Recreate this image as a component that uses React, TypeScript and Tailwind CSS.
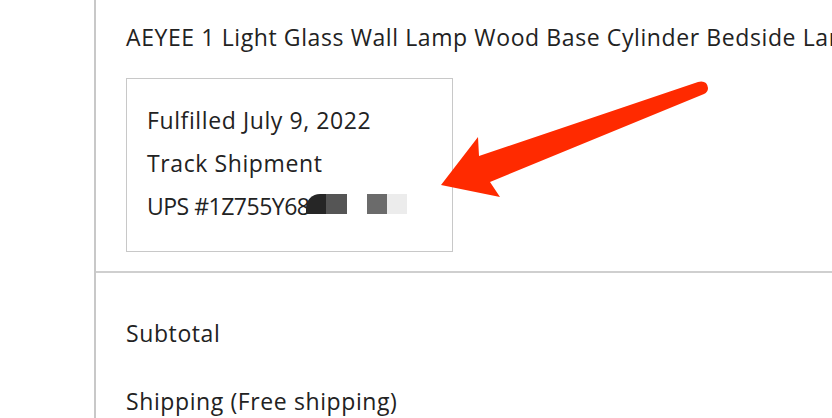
import React from "react";

export default function App() {
  return (
    <div className="relative w-[832px] h-[418px] overflow-hidden bg-white flex text-[#222222] tracking-[0.6px]" style={{ fontFamily: '"Open Sans", "Noto Sans", sans-serif' }}>
      <div className="w-[94px] shrink-0" />
      <div className="flex-1 border-l-2 border-[#c8c8c8] flex flex-col">
        <div className="pl-[30px] pt-[22px] pb-[19px] border-b-2 border-[#cfcfcf]">
          <div className="text-[23px] leading-[30px] whitespace-nowrap">AEYEE 1 Light Glass Wall Lamp Wood Base Cylinder Bedside Lamp</div>
          <div className="mt-[26px] w-[327px] border border-[#c8c8c8] pl-[20px] pt-[20px] pb-[23px] text-[23px] leading-[43px]">
            <div>Fulfilled July 9, 2022</div>
            <div>Track Shipment</div>
            <div className="flex items-center">
              <span className="tracking-[-0.5px]">UPS #1Z755Y68</span>
              <span className="flex h-[20px] -ml-[3px] -translate-y-[3px]">
                <span className="w-[20px] h-[20px] bg-[#262626] rounded-tl-[14px]" />
                <span className="w-[21px] h-[20px] bg-[#555555]" />
                <span className="w-[20px] h-[20px] bg-white" />
                <span className="w-[20px] h-[20px] bg-[#6b6b6b]" />
                <span className="w-[20px] h-[20px] bg-[#ececec]" />
              </span>
            </div>
          </div>
        </div>
        <div className="pl-[30px] pt-[26px] text-[23px] leading-[68px]">
          <div>Subtotal</div>
          <div>Shipping (Free shipping)</div>
        </div>
      </div>
      <svg className="absolute left-0 top-0" width="832" height="418" viewBox="0 0 832 418">
        <path
          d="M441 185 L478 137 L479 156 L698 82 Q707 80 708 88 Q708 92 704 94 L490 182 L500 197 Z"
          fill="#ff2a00"
        />
      </svg>
    </div>
  );
}
